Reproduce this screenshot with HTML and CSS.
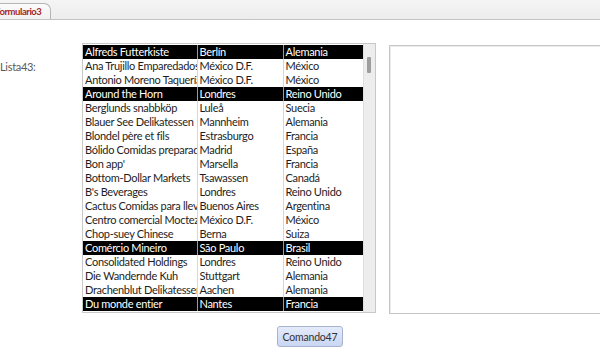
FILE: index.html
```html
<!DOCTYPE html>
<html lang="es">
<head>
    <meta charset="UTF-8">
    <title>Formulario3</title>
    <link rel="stylesheet" href="styles.css">
</head>
<body>

    <div class="tabs">
        <div class="tab">Formulario3</div>
    </div>

    <div class="form">
        <label class="caption">Lista43:</label>

        <div class="listbox">
            <table class="rows">
                <colgroup>
                    <col class="c1"><col class="c2"><col class="c3">
                </colgroup>
                <tr class="sel"><td>Alfreds Futterkiste</td><td>Berlín</td><td>Alemania</td></tr>
                <tr><td>Ana Trujillo Emparedados y helados</td><td>México D.F.</td><td>México</td></tr>
                <tr><td>Antonio Moreno Taquería</td><td>México D.F.</td><td>México</td></tr>
                <tr class="sel"><td>Around the Horn</td><td>Londres</td><td>Reino Unido</td></tr>
                <tr><td>Berglunds snabbköp</td><td>Luleå</td><td>Suecia</td></tr>
                <tr><td>Blauer See Delikatessen</td><td>Mannheim</td><td>Alemania</td></tr>
                <tr><td>Blondel père et fils</td><td>Estrasburgo</td><td>Francia</td></tr>
                <tr><td>Bólido Comidas preparadas</td><td>Madrid</td><td>España</td></tr>
                <tr><td>Bon app'</td><td>Marsella</td><td>Francia</td></tr>
                <tr><td>Bottom-Dollar Markets</td><td>Tsawassen</td><td>Canadá</td></tr>
                <tr><td>B's Beverages</td><td>Londres</td><td>Reino Unido</td></tr>
                <tr><td>Cactus Comidas para llevar</td><td>Buenos Aires</td><td>Argentina</td></tr>
                <tr><td>Centro comercial Moctezuma</td><td>México D.F.</td><td>México</td></tr>
                <tr><td>Chop-suey Chinese</td><td>Berna</td><td>Suiza</td></tr>
                <tr class="sel"><td>Comércio Mineiro</td><td>São Paulo</td><td>Brasil</td></tr>
                <tr><td>Consolidated Holdings</td><td>Londres</td><td>Reino Unido</td></tr>
                <tr><td>Die Wandernde Kuh</td><td>Stuttgart</td><td>Alemania</td></tr>
                <tr><td>Drachenblut Delikatessen</td><td>Aachen</td><td>Alemania</td></tr>
                <tr class="sel"><td>Du monde entier</td><td>Nantes</td><td>Francia</td></tr>
            </table>
            <div class="scrollbar">
                <div class="thumb"></div>
            </div>
        </div>

        <div class="preview"></div>
    </div>

    <div class="actions">
        <button class="btn">Comando47</button>
    </div>

</body>
</html>
```

FILE: styles.css
```css
* {
    margin: 0;
    padding: 0;
    box-sizing: border-box;
}

body {
    width: 600px;
    height: 363px;
    overflow: hidden;
    background: #fff;
    font-family: Lato, "Open Sans", sans-serif;
    font-size: 11px;
}

/* tab strip */
.tabs {
    height: 20px;
    background: linear-gradient(#f5f5f5, #ececec);
    border-bottom: 1px solid #c4c4c4;
    display: flex;
    align-items: flex-end;
    overflow: hidden;
}

.tab {
    margin-left: -8px;
    height: 16px;
    padding: 1px 9px 0 2px;
    background: linear-gradient(#fbfbfb, #f1f1f1);
    border: 1px solid #b5b5b5;
    border-bottom: none;
    border-radius: 0 7px 0 0;
    color: #a3262a;
    font-weight: bold;
    font-size: 9.5px;
    letter-spacing: -0.45px;
    line-height: 13px;
}

/* form body */
.form {
    display: flex;
    align-items: flex-start;
    padding-top: 23px;
    height: 306px;
}

.caption {
    flex-shrink: 0;
    width: 82px;
    padding-top: 17px;
    color: #5a5a5a;
    font-size: 11px;
    letter-spacing: -0.3px;
}

.listbox {
    flex-shrink: 0;
    display: flex;
    width: 294px;
    height: 270px;
    border: 1px solid #c8c8c8;
    padding: 1px 0 0 0;
}

.rows {
    width: 280px;
    table-layout: fixed;
    border-collapse: collapse;
    align-self: flex-start;
}

.c1 { width: 114px; }
.c2 { width: 86px; }
.c3 { width: 80px; }

.rows td {
    height: 14px;
    line-height: 14px;
    padding: 0 0 0 2px;
    white-space: nowrap;
    overflow: hidden;
    color: #1e1e1e;
    letter-spacing: -0.3px;
    border-left: 1px solid #d6d6d6;
}

.rows td:first-child {
    border-left: none;
}

.rows tr.sel td {
    background: #000;
    color: #fff;
    border-left-color: #9a9a9a;
}

.scrollbar {
    width: 13px;
    margin-top: -1px;
    background: #ededed;
    border-left: 1px solid #dedede;
    padding-top: 13px;
}

.thumb {
    width: 4px;
    height: 16px;
    margin-left: 3px;
    background: #9d9d9d;
    border-radius: 1px;
}

.preview {
    flex-shrink: 0;
    margin-left: 13px;
    margin-top: 2px;
    width: 220px;
    height: 269px;
    border: 1px solid #c6c6c6;
    box-shadow: inset 1px 1px 0 #ececec;
}

/* button row */
.actions {
    padding-left: 277px;
}

.btn {
    width: 66px;
    height: 21px;
    border: 1px solid #a8b4cf;
    border-radius: 3px;
    background: linear-gradient(#e4ebfb, #c9d6f3);
    color: #333;
    font-family: Lato, "Open Sans", sans-serif;
    font-size: 10.5px;
    letter-spacing: -0.2px;
}
```
